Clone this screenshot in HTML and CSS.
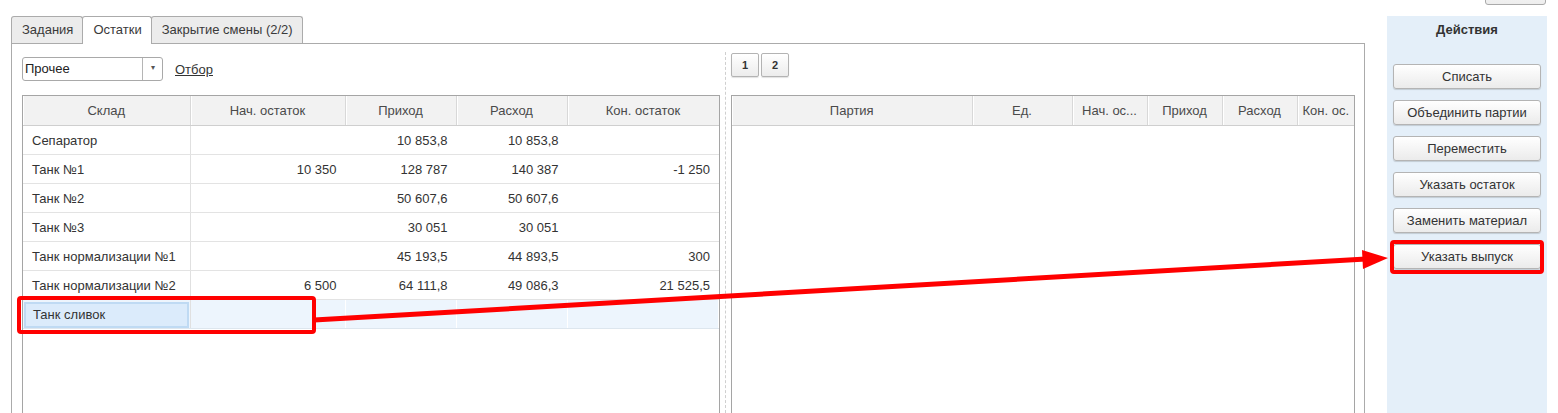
FILE: index.html
```html
<!DOCTYPE html>
<html lang="ru">
<head>
<meta charset="utf-8">
<link rel="stylesheet" href="styles.css">
</head>
<body>
<div class="page">
  <div class="main">
    <div class="tabs">
      <div class="tab">Задания</div>
      <div class="tab active">Остатки</div>
      <div class="tab">Закрытие смены (2/2)</div>
    </div>
    <div class="panel">
      <div class="left">
        <div class="toolbar">
          <div class="select"><span class="select-text">Прочее</span><span class="select-btn">▾</span></div>
          <a class="link">Отбор</a>
        </div>
        <div class="grid">
          <table class="tbl tbl-left">
            <colgroup><col style="width:167px"><col style="width:155px"><col style="width:111px"><col style="width:111px"><col></colgroup>
            <thead><tr><th>Склад</th><th>Нач. остаток</th><th>Приход</th><th>Расход</th><th class="last">Кон. остаток</th></tr></thead>
            <tbody>
              <tr><td>Сепаратор</td><td class="n"></td><td class="n">10 853,8</td><td class="n">10 853,8</td><td class="n"></td></tr>
              <tr><td>Танк №1</td><td class="n">10 350</td><td class="n">128 787</td><td class="n">140 387</td><td class="n">-1 250</td></tr>
              <tr><td>Танк №2</td><td class="n"></td><td class="n">50 607,6</td><td class="n">50 607,6</td><td class="n"></td></tr>
              <tr><td>Танк №3</td><td class="n"></td><td class="n">30 051</td><td class="n">30 051</td><td class="n"></td></tr>
              <tr><td>Танк нормализации №1</td><td class="n"></td><td class="n">45 193,5</td><td class="n">44 893,5</td><td class="n">300</td></tr>
              <tr><td>Танк нормализации №2</td><td class="n">6 500</td><td class="n">64 111,8</td><td class="n">49 086,3</td><td class="n">21 525,5</td></tr>
              <tr class="sel"><td><div class="cur">Танк сливок</div></td><td class="n"></td><td class="n"></td><td class="n"></td><td class="n"></td></tr>
            </tbody>
          </table>
        </div>
      </div>
      <div class="sep"></div>
      <div class="right">
        <div class="pager"><button class="pbtn">1</button><button class="pbtn">2</button></div>
        <div class="grid">
          <table class="tbl">
            <colgroup><col style="width:240px"><col style="width:100px"><col style="width:75px"><col style="width:75px"><col style="width:75px"><col></colgroup>
            <thead><tr><th>Партия</th><th>Ед.</th><th>Нач. ос...</th><th>Приход</th><th>Расход</th><th class="last clip">Кон. ос.</th></tr></thead>
          </table>
        </div>
      </div>
    </div>
  </div>
  <div class="side">
    <button class="topbtn"></button>
    <div class="actions">
      <div class="actions-title">Действия</div>
      <div class="btns">
        <button class="btn">Списать</button>
        <button class="btn">Объединить партии</button>
        <button class="btn">Переместить</button>
        <button class="btn">Указать остаток</button>
        <button class="btn">Заменить материал</button>
        <button class="btn">Указать выпуск</button>
      </div>
    </div>
  </div>
</div>
<svg class="annot" width="1558" height="413" viewBox="0 0 1558 413">
  <rect x="19" y="298" width="295" height="34" rx="2" fill="none" stroke="#ff0000" stroke-width="4"/>
  <rect x="1392" y="242" width="150" height="30" rx="2" fill="none" stroke="#ff0000" stroke-width="4"/>
  <line x1="314" y1="320" x2="1366" y2="259" stroke="#ff0000" stroke-width="5"/>
  <polygon points="1388,258 1362,250 1363,269" fill="#ff0000"/>
</svg>
</body>
</html>
```
FILE: styles.css
```css
html, body {
  margin: 0;
  padding: 0;
  background: #fff;
  overflow: hidden;
  height: 413px;
}
body {
  font-family: "Liberation Sans", Arial, sans-serif;
  font-size: 13px;
  color: #333;
  position: relative;
}
.page {
  display: flex;
  padding-left: 11px;
  align-items: flex-start;
}
.main {
  margin-top: 16px;
  display: flex;
  flex-direction: column;
}
.tabs {
  display: flex;
  height: 27px;
  position: relative;
  z-index: 1;
}
.tab {
  box-sizing: border-box;
  height: 27px;
  padding: 0 9px 0 10px;
  line-height: 26px;
  border: 1px solid #ababab;
  border-bottom: none;
  border-radius: 3px 3px 0 0;
  background: #ececec;
  color: #3a3a3a;
  margin-right: -1px;
}
.tab.active {
  background: #fff;
  height: 28px;
  z-index: 2;
}
.panel {
  display: flex;
  border: 1px solid #ababab;
  border-bottom: none;
  padding: 9px 9px 0 10px;
  height: 370px;
  box-sizing: border-box;
  width: 1354px;
}
.left {
  width: 698px;
  padding-top: 4px;
  display: flex;
  flex-direction: column;
}
.toolbar {
  display: flex;
  align-items: center;
  height: 24px;
  margin-bottom: 14px;
}
.select {
  box-sizing: border-box;
  width: 141px;
  height: 24px;
  border: 1px solid #a9a9a9;
  border-radius: 3px;
  display: flex;
  background: #fff;
}
.select-text {
  flex: 1;
  padding-left: 2px;
  line-height: 22px;
  color: #222;
}
.select-btn {
  width: 19px;
  border-left: 1px solid #b5b5b5;
  font-size: 8px;
  color: #555;
  text-align: center;
  line-height: 20px;
}
.link {
  margin-left: 12px;
  text-decoration: underline;
  color: #333;
}
.grid {
  border: 1px solid #a5a5a5;
  border-bottom: none;
  flex: 1;
  background: #fff;
}
.tbl {
  border-collapse: collapse;
  table-layout: fixed;
  width: 100%;
}
.tbl th {
  height: 29px;
  padding: 0 4px;
  background: #f2f2f2;
  font-weight: normal;
  color: #4a4a4a;
  border-bottom: 1px solid #cfcfcf;
  border-right: 1px solid #d8d8d8;
  box-shadow: inset 1px 0 0 #fff;
  text-align: center;
  white-space: nowrap;
  overflow: hidden;
  text-overflow: ellipsis;
}
.tbl th.last {
  border-right: none;
}
.tbl th.clip {
  text-overflow: clip;
}
.tbl td {
  height: 28px;
  padding: 0 8px 0 9px;
  border-bottom: 1px solid #e3e3e3;
  border-right: 1px solid #fff;
  white-space: nowrap;
  color: #333;
}
.tbl td:first-child {
  border-right: 1px solid #e0e0e0;
}
.tbl td.n {
  text-align: right;
}
.tbl tr.sel td {
  background: #edf5fd;
  border-bottom-color: #dde6ee;
}
.tbl tr.sel td:first-child {
  padding: 0;
}
.cur {
  box-sizing: border-box;
  height: 26px;
  margin: 2px 1px 0 1px;
  background: #dbebfb;
  border: 2px solid #bfdaf3;
  padding-left: 7px;
  line-height: 22px;
}
.sep {
  width: 0;
  border-left: 1px dashed #cfcfcf;
  margin: -1px 5px 0 5px;
}
.right {
  width: 624px;
  display: flex;
  flex-direction: column;
}
.pager {
  display: flex;
  gap: 2px;
  height: 24px;
  margin-bottom: 18px;
}
.pbtn {
  box-sizing: border-box;
  width: 28px;
  height: 24px;
  padding: 0;
  border: 1px solid #b3b3b3;
  border-radius: 2px;
  background: linear-gradient(#ffffff, #ececec);
  box-shadow: 0 1px 1px rgba(0, 0, 0, 0.12);
  font-family: "Liberation Sans", Arial, sans-serif;
  font-size: 11px;
  font-weight: bold;
  color: #333;
}
.side {
  margin-left: 22px;
  width: 160px;
  display: flex;
  flex-direction: column;
}
.topbtn {
  align-self: flex-end;
  width: 61px;
  height: 25px;
  margin-top: -20px;
  margin-right: 1px;
  border: 1px solid #aaa;
  border-radius: 3px;
  background: linear-gradient(#fff, #ededed);
}
.actions {
  margin-top: 11px;
  background: #e4eff9;
  height: 397px;
}
.actions-title {
  text-align: center;
  font-weight: bold;
  color: #333;
  padding-top: 6px;
  height: 42px;
  box-sizing: border-box;
  line-height: 15px;
}
.btns {
  display: flex;
  flex-direction: column;
  gap: 11px;
  padding: 6px 6px 0 6px;
}
.btn {
  box-sizing: border-box;
  width: 148px;
  height: 25px;
  border: 1px solid #b4b4b4;
  border-radius: 3px;
  background: linear-gradient(#ffffff, #ebebeb);
  box-shadow: 0 1px 1px rgba(0, 0, 0, 0.15);
  font-family: "Liberation Sans", Arial, sans-serif;
  font-size: 13px;
  color: #333;
  padding: 0;
}
.annot {
  position: absolute;
  left: 0;
  top: 0;
  pointer-events: none;
}
```
